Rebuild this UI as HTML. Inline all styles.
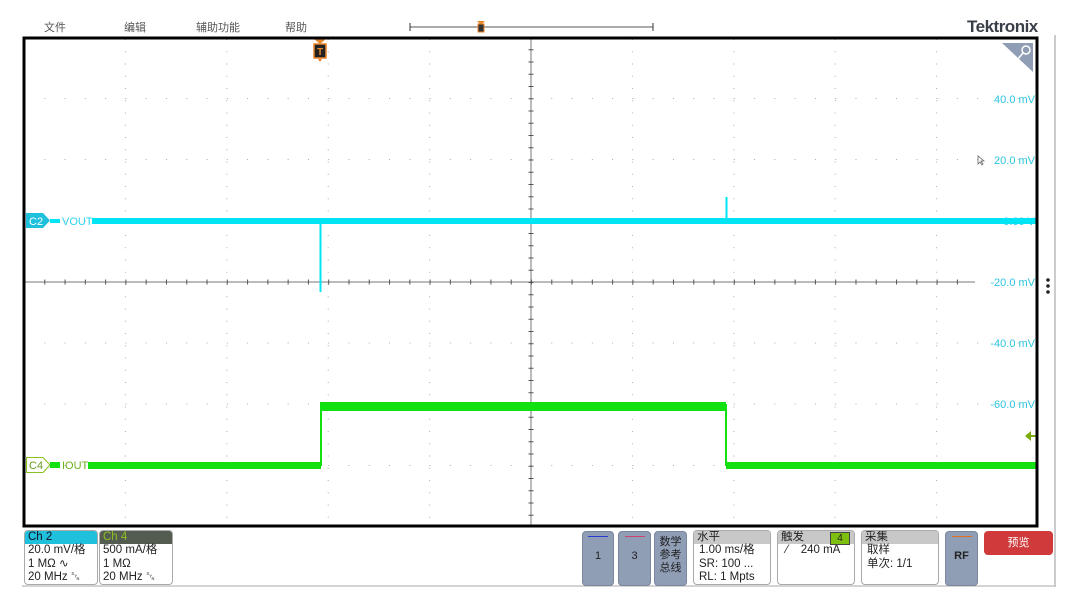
<!DOCTYPE html>
<html><head><meta charset="utf-8"><style>
body{margin:0;width:1080px;height:602px;background:#fff;overflow:hidden;position:relative;font-family:"Liberation Sans","Noto Sans CJK SC",sans-serif;}
.m{position:absolute;top:19px;font-size:11px;color:#555;}
.box{position:absolute;border:1px solid #aaa;border-radius:4px;background:#fff;font-size:11.5px;color:#222;overflow:hidden;line-height:13.5px}
.hd{height:13px;padding-left:3px;}
.bl{position:absolute;top:531px;height:53px;background:#8f9db5;border:1px solid #7a879e;border-radius:4px;font-size:11px;color:#222;text-align:center;}
</style></head><body>
<div class="m" style="left:44px">文件</div>
<div class="m" style="left:124px">编辑</div>
<div class="m" style="left:196px">辅助功能</div>
<div class="m" style="left:285px">帮助</div>
<div style="position:absolute;left:967px;top:17px;font-size:17px;font-weight:bold;color:#3a3f4a;letter-spacing:-0.5px">Tektronix</div>
<svg width="1080" height="602" style="position:absolute;left:0;top:0">
<line x1="410" y1="27" x2="653" y2="27" stroke="#555" stroke-width="1"/>
<line x1="410" y1="23" x2="410" y2="31" stroke="#333"/><line x1="653" y1="23" x2="653" y2="31" stroke="#333"/>
<polygon points="477,21 485,21 481,25" fill="#e8862a"/><rect x="478" y="24" width="6" height="8" fill="#333" stroke="#e8862a"/>
<line x1="1055" y1="35" x2="1055" y2="587" stroke="#bbb" stroke-width="1.5"/>
<line x1="22" y1="586" x2="1055" y2="586" stroke="#aaa" stroke-width="1"/>
<circle cx="1048" cy="280" r="1.8" fill="#222"/><circle cx="1048" cy="286" r="1.8" fill="#222"/><circle cx="1048" cy="292" r="1.8" fill="#222"/>
<g stroke="#aaa" stroke-width="1" stroke-dasharray="1 11.25">
<line x1="125.4" y1="39" x2="125.4" y2="526"/><line x1="226.8" y1="39" x2="226.8" y2="526"/><line x1="328.2" y1="39" x2="328.2" y2="526"/><line x1="429.6" y1="39" x2="429.6" y2="526"/>
<line x1="632.4" y1="39" x2="632.4" y2="526"/><line x1="733.8" y1="39" x2="733.8" y2="526"/><line x1="835.2" y1="39" x2="835.2" y2="526"/><line x1="936.6" y1="39" x2="936.6" y2="526"/>
</g>
<g stroke="#aaa" stroke-width="1" stroke-dasharray="1 19.28">
<line x1="24" y1="98.5" x2="1038" y2="98.5"/><line x1="24" y1="159.5" x2="1038" y2="159.5"/><line x1="24" y1="221" x2="1038" y2="221"/>
<line x1="24" y1="343" x2="1038" y2="343"/><line x1="24" y1="404" x2="1038" y2="404"/><line x1="24" y1="465.5" x2="1038" y2="465.5"/>
</g>
<line x1="24" y1="282" x2="975" y2="282" stroke="#777" stroke-width="1"/>
<line x1="531" y1="37" x2="531" y2="527" stroke="#777" stroke-width="1"/>
<line x1="24" y1="282" x2="975" y2="282" stroke="#555" stroke-width="5" stroke-dasharray="1 19.28"/>
<line x1="531" y1="37" x2="531" y2="527" stroke="#555" stroke-width="5" stroke-dasharray="1 11.25"/>
<g font-family="Liberation Sans,sans-serif" font-size="11" fill="#2cc4e0" text-anchor="end">
<text x="1035" y="103">40.0 mV</text><text x="1035" y="164">20.0 mV</text><text x="1035" y="225">0.00 V</text>
<text x="1035" y="286">-20.0 mV</text><text x="1035" y="347">-40.0 mV</text><text x="1035" y="408">-60.0 mV</text>
</g>
<rect x="92" y="218" width="944" height="6" fill="#00e5f5"/>
<line x1="320.5" y1="221" x2="320.5" y2="292" stroke="#00e5f5" stroke-width="2"/>
<line x1="726.5" y1="221" x2="726.5" y2="197" stroke="#00e5f5" stroke-width="2"/>
<rect x="88" y="462" width="233" height="7" fill="#11e011"/>
<rect x="320" y="402" width="406" height="9" fill="#11e011"/>
<line x1="321" y1="466" x2="321" y2="404" stroke="#11e011" stroke-width="2"/>
<line x1="726" y1="404" x2="726" y2="466" stroke="#11e011" stroke-width="2"/>
<rect x="726" y="462" width="310" height="7" fill="#11e011"/>
<polygon points="26,213 43,213 50,220.5 43,228 26,228" fill="#1ec0dc"/>
<text x="29" y="225" font-size="11" fill="#fff" font-family="Liberation Sans">C2</text>
<rect x="50" y="219" width="10" height="4" fill="#00e5f5"/>
<text x="62" y="225" font-size="11" fill="#2cd4ee" font-family="Liberation Sans">VOUT</text>
<polygon points="26.5,457.5 43,457.5 50,465 43,472.5 26.5,472.5" fill="#fff" stroke="#8ac020"/>
<text x="29" y="469" font-size="11" fill="#6a9a20" font-family="Liberation Sans">C4</text>
<rect x="50" y="462" width="10" height="6" fill="#11e011"/>
<text x="62" y="469" font-size="11" fill="#6cb020" font-family="Liberation Sans">IOUT</text>
<polygon points="1025,436 1031,431 1031,441" fill="#7aaa10"/><rect x="1030" y="435" width="8" height="2" fill="#7aaa10"/>
<polygon points="313,38 327,38 320,44" fill="#e8862a"/>
<rect x="314" y="44" width="12" height="14" fill="#222" stroke="#e8862a" stroke-width="1.5"/>
<text x="317" y="55" font-size="10" fill="#e8862a" font-weight="bold" font-family="Liberation Sans">T</text>
<polygon points="318,59 322,59 320,62" fill="#e8862a"/>
<polygon points="1002,43 1033,43 1033,72" fill="#8f9db5"/>
<circle cx="1026" cy="50" r="4" fill="none" stroke="#fff" stroke-width="1.5"/><line x1="1023" y1="53" x2="1017" y2="60" stroke="#fff" stroke-width="1.5"/>
<path d="M978 156 l0 8 l2 -2 l2 3 l1 -1 l-2 -3 l3 0 z" fill="#fff" stroke="#666" stroke-width="0.8"/>
<rect x="24" y="38" width="1013" height="488" fill="none" stroke="#000" stroke-width="3"/>
</svg>
<div class="box" style="left:24px;top:530px;width:72px;height:53px"><div class="hd" style="background:#1ec0dc;color:#112">Ch 2</div><div style="padding-left:3px">20.0 mV/格<br>1 MΩ ∿<br>20 MHz ␖</div></div>
<div class="box" style="left:99px;top:530px;width:72px;height:53px"><div class="hd" style="background:#545c52;color:#8dc020">Ch 4</div><div style="padding-left:3px">500 mA/格<br>1 MΩ<br>20 MHz ␖</div></div>
<div class="bl" style="left:582px;width:30px"><div style="margin:4px auto 0;width:20px;height:1px;background:#2a3ad0"></div><div style="margin-top:13px">1</div></div>
<div class="bl" style="left:618px;width:31px"><div style="margin:4px auto 0;width:20px;height:1px;background:#d04070"></div><div style="margin-top:13px">3</div></div>
<div class="bl" style="left:654px;width:31px;line-height:13px;padding-top:4px;height:49px">数学<br>参考<br>总线</div>
<div class="box" style="left:693px;top:530px;width:76px;height:53px"><div class="hd" style="background:#c8c8c8">水平</div><div style="padding-left:5px">1.00 ms/格<br>SR: 100 ...<br>RL: 1 Mpts</div></div>
<div class="box" style="left:777px;top:530px;width:76px;height:53px"><div class="hd" style="background:#c8c8c8">触发<span style="position:absolute;left:52px;top:1px;width:18px;height:11px;background:#7ec010;border:1px solid #444;text-align:center;font-size:10px;line-height:11px">4</span></div><div style="padding-left:8px">⁄&nbsp;&nbsp;&nbsp; 240 mA</div></div>
<div class="box" style="left:861px;top:530px;width:76px;height:53px"><div class="hd" style="background:#c8c8c8">采集</div><div style="padding-left:5px">取样<br>单次: 1/1</div></div>
<div class="bl" style="left:945px;width:31px"><div style="margin:4px auto 0;width:20px;height:1px;background:#e07020"></div><div style="margin-top:13px;font-weight:bold">RF</div></div>
<div style="position:absolute;left:984px;top:531px;width:69px;height:24px;background:#d03a3a;border-radius:4px;color:#fff;font-size:11px;text-align:center;line-height:24px">预览</div>
</body></html>
